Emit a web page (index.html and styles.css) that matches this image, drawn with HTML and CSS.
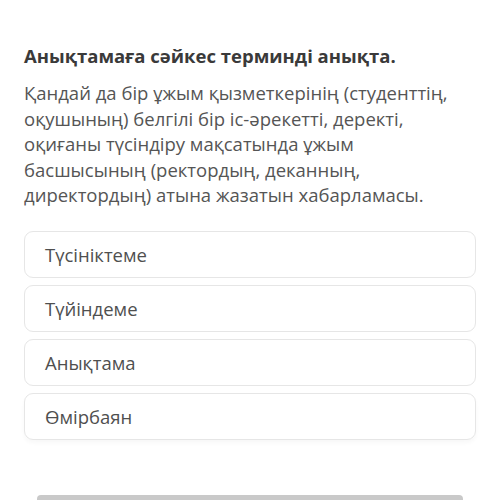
FILE: index.html
```html
<!DOCTYPE html>
<html lang="kk">
<head>
<meta charset="utf-8">
<link rel="stylesheet" href="styles.css">
</head>
<body>
<div class="page">
  <div class="question">
    <h1 class="title">Анықтамаға сәйкес терминді анықта.</h1>
    <p class="text">Қандай да бір ұжым қызметкерінің (студенттің, оқушының) белгілі бір іс-әрекетті, деректі, оқиғаны түсіндіру мақсатында ұжым басшысының (ректордың, деканның, директордың) атына жазатын хабарламасы.</p>
    <div class="options">
      <div class="option">Түсініктеме</div>
      <div class="option">Түйіндеме</div>
      <div class="option">Анықтама</div>
      <div class="option">Өмірбаян</div>
    </div>
  </div>
  <div class="footer">
    <div class="bar"></div>
  </div>
</div>
</body>
</html>
```
FILE: styles.css
```css
html, body {
  margin: 0;
  padding: 0;
  background: #ffffff;
}
body {
  font-family: "Open Sans", "Noto Sans", sans-serif;
  color: #4a4a4a;
  width: 500px;
  height: 500px;
  overflow: hidden;
}
.page {
  padding: 44px 24px 0;
}
.title {
  margin: 0;
  font-size: 18.5px;
  line-height: 24px;
  font-weight: 700;
  color: #3a3a3a;
}
.text {
  margin: 12px 0 0;
  max-width: 440px;
  font-size: 18.5px;
  line-height: 25.5px;
  color: #555555;
}
.options {
  margin-top: 23px;
  display: flex;
  flex-direction: column;
  gap: 7px;
}
.option {
  height: 45px;
  border: 1px solid #e6e6e6;
  border-radius: 9px;
  padding: 0 20px;
  display: flex;
  align-items: center;
  font-size: 18.5px;
  color: #4f4f4f;
}
.option:last-child {
  box-shadow: 0 3px 4px rgba(0, 0, 0, 0.03);
}
.footer {
  margin-top: 55px;
  padding: 0 13px;
}
.bar {
  height: 12px;
  background: #c9c9c9;
  border-radius: 4px 4px 0 0;
}
```
